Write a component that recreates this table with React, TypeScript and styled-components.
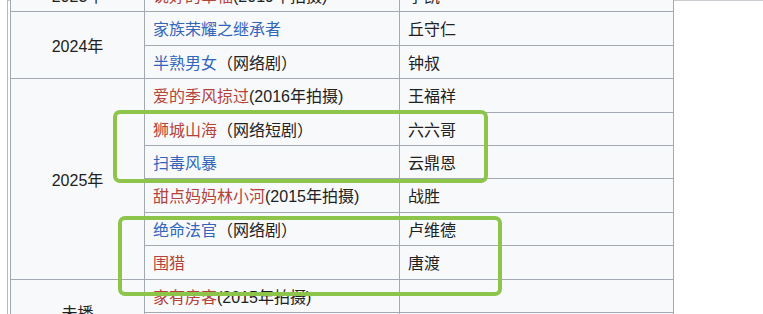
import React from "react";
import styled, { createGlobalStyle } from "styled-components";

const GlobalStyle = createGlobalStyle`
  html, body {
    margin: 0;
    padding: 0;
    overflow: hidden;
    background: #ffffff;
  }
  body {
    font-family: "Liberation Sans", "Noto Sans CJK SC", sans-serif;
    color: #202122;
  }
`;

const Stage = styled.div`
  position: relative;
  width: 763px;
  height: 314px;
  overflow: hidden;
`;

const Page = styled.div`
  margin-left: 7px;
  height: 100%;
  border-left: 1px solid #b4b9bf;
  border-top: 1px solid #c8ccd1;
  padding-left: 2px;
  box-sizing: border-box;
`;

const Table = styled.table`
  margin-top: -23px;
  width: 663px;
  table-layout: fixed;
  border-collapse: collapse;
  background: #f8f9fa;
  font-size: 16px;
  line-height: 25.6px;
`;

const Cell = styled.td<{ $center?: boolean }>`
  border: 1px solid #a2a9b1;
  padding: 5px 8px 1.8px;
  vertical-align: middle;
  text-align: ${(p) => (p.$center ? "center" : "left")};
  white-space: nowrap;
  overflow: hidden;
`;

const Link = styled.span<{ $tone: "blue" | "red" }>`
  color: ${(p) => (p.$tone === "blue" ? "#3366bb" : "#b4433a")};
`;

const Highlight = styled.div<{ $x: number; $y: number; $w: number; $h: number }>`
  position: absolute;
  left: ${(p) => p.$x}px;
  top: ${(p) => p.$y}px;
  width: ${(p) => p.$w}px;
  height: ${(p) => p.$h}px;
  box-sizing: border-box;
  border: 4px solid #8dc44a;
  border-radius: 7px;
  pointer-events: none;
`;

type Row = {
  year?: string;
  span?: number;
  title: string;
  tone: "blue" | "red";
  note?: string;
  role: string;
};

const rows: Row[] = [
  { year: "2023年", span: 1, title: "说好的幸福", tone: "red", note: "(2019年拍摄)", role: "李凯" },
  { year: "2024年", span: 2, title: "家族荣耀之继承者", tone: "blue", role: "丘守仁" },
  { title: "半熟男女", tone: "blue", note: "（网络剧）", role: "钟叔" },
  { year: "2025年", span: 6, title: "爱的季风掠过", tone: "red", note: "(2016年拍摄)", role: "王福祥" },
  { title: "狮城山海", tone: "red", note: "（网络短剧）", role: "六六哥" },
  { title: "扫毒风暴", tone: "blue", role: "云鼎恩" },
  { title: "甜点妈妈林小河", tone: "red", note: "(2015年拍摄)", role: "战胜" },
  { title: "绝命法官", tone: "blue", note: "（网络剧）", role: "卢维德" },
  { title: "围猎", tone: "red", role: "唐渡" },
  { year: "未播", span: 2, title: "家有房客", tone: "red", note: "(2015年拍摄)", role: "" },
  { title: "大城小室", tone: "red", role: "" },
];

export default function App() {
  return (
    <>
      <GlobalStyle />
      <Stage>
        <Page>
          <Table>
            <colgroup>
              <col style={{ width: 134 }} />
              <col style={{ width: 255 }} />
              <col style={{ width: 274 }} />
            </colgroup>
            <tbody>
              {rows.map((r, i) => (
                <tr key={i}>
                  {r.year && (
                    <Cell $center rowSpan={r.span}>
                      {r.year}
                    </Cell>
                  )}
                  <Cell>
                    <Link $tone={r.tone}>{r.title}</Link>
                    {r.note}
                  </Cell>
                  <Cell>{r.role}</Cell>
                </tr>
              ))}
            </tbody>
          </Table>
        </Page>
        <Highlight $x={113} $y={110} $w={375} $h={73} />
        <Highlight $x={118} $y={216} $w={384} $h={80} />
      </Stage>
    </>
  );
}
